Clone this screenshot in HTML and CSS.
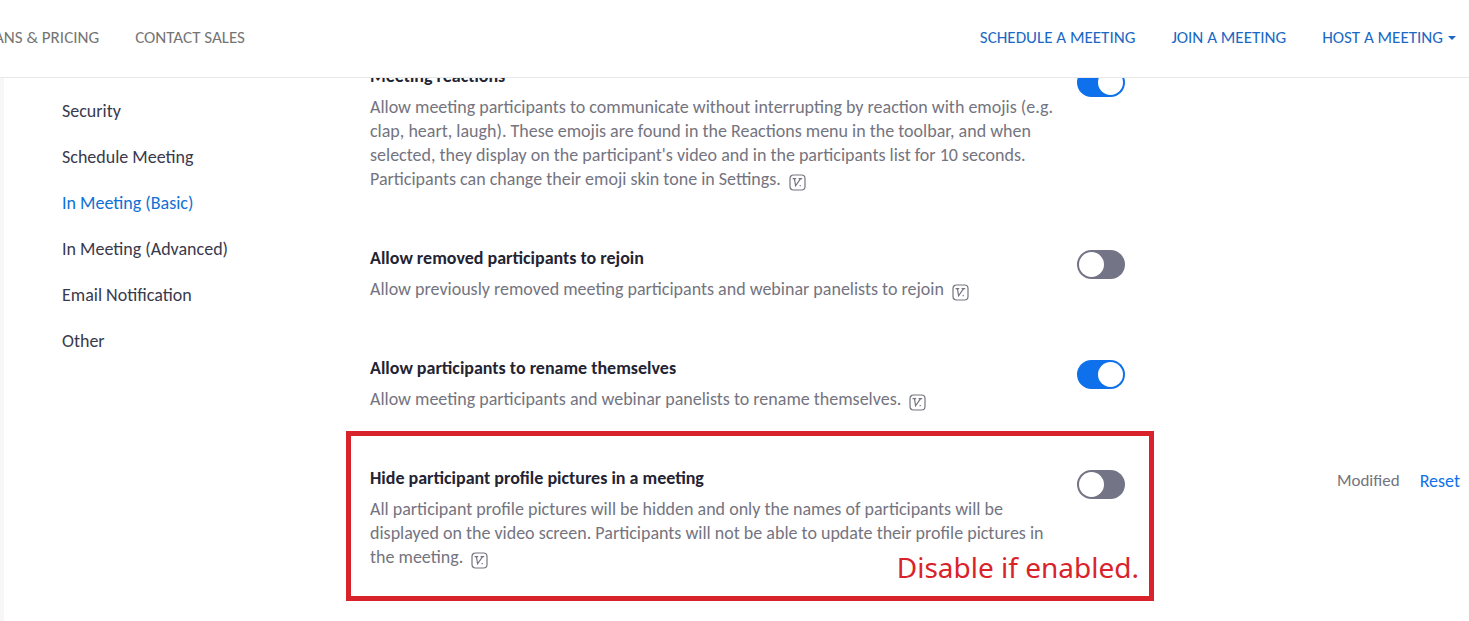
FILE: index.html
```html
<!DOCTYPE html>
<html lang="en">
<head>
<meta charset="utf-8">
<title>Settings</title>
<meta name="viewport" content="width=device-width, initial-scale=1">
<link rel="stylesheet" href="styles.css">
</head>
<body>
<svg class="sprite" aria-hidden="true">
  <symbol id="version" viewBox="0 0 17 17">
    <rect x="1" y="1" width="15" height="15" rx="3.5" fill="none" stroke="currentColor" stroke-width="1.2"/>
    <path d="M3.6 4.6h3.6M9.6 4.6h3.6M5.4 4.6l1.2 7.2 5-7.2M10.6 11.6h1.2" fill="none" stroke="currentColor" stroke-width="1.2"/>
  </symbol>
</svg>
<header class="topbar">
  <nav class="nav nav-site" aria-label="Site">
    <a href="#">PLANS &amp; PRICING</a>
    <a href="#">CONTACT SALES</a>
  </nav>
  <nav class="nav nav-actions" aria-label="Meetings">
    <a href="#">SCHEDULE A MEETING</a>
    <a href="#">JOIN A MEETING</a>
    <button class="menu-button" type="button">HOST A MEETING<span class="caret"></span></button>
  </nav>
</header>
<div class="page">
  <nav class="sections" aria-label="Settings sections">
    <a href="#">Security</a>
    <a href="#">Schedule Meeting</a>
    <a class="current" href="#">In Meeting (Basic)</a>
    <a href="#">In Meeting (Advanced)</a>
    <a href="#">Email Notification</a>
    <a href="#">Other</a>
  </nav>
  <main class="settings">
    <section class="setting">
      <div class="info">
        <label class="title" for="reactions">Meeting reactions</label>
        <p class="desc">Allow meeting participants to communicate without interrupting by reaction with emojis (e.g. clap, heart, laugh). These emojis are found in the Reactions menu in the toolbar, and when selected, they display on the participant's video and in the participants list for 10 seconds. Participants can change their emoji skin tone in Settings. <svg class="version"><use href="#version"/></svg></p>
      </div>
      <input class="switch" id="reactions" type="checkbox" role="switch" checked>
    </section>
    <section class="setting">
      <div class="info">
        <label class="title" for="rejoin">Allow removed participants to rejoin</label>
        <p class="desc">Allow previously removed meeting participants and webinar panelists to rejoin <svg class="version"><use href="#version"/></svg></p>
      </div>
      <input class="switch" id="rejoin" type="checkbox" role="switch">
    </section>
    <section class="setting">
      <div class="info">
        <label class="title" for="rename">Allow participants to rename themselves</label>
        <p class="desc">Allow meeting participants and webinar panelists to rename themselves. <svg class="version"><use href="#version"/></svg></p>
      </div>
      <input class="switch" id="rename" type="checkbox" role="switch" checked>
    </section>
    <section class="setting">
      <div class="info">
        <label class="title" for="pictures">Hide participant profile pictures in a meeting</label>
        <p class="desc">All participant profile pictures will be hidden and only the names of participants will be displayed on the video screen. Participants will not be able to update their profile pictures in the meeting. <svg class="version"><use href="#version"/></svg></p>
      </div>
      <input class="switch" id="pictures" type="checkbox" role="switch">
      <div class="status"><span>Modified</span><a href="#">Reset</a></div>
      <div class="callout">Disable if enabled.</div>
    </section>
  </main>
</div>
</body>
</html>
```
FILE: styles.css
```css
* { box-sizing: border-box; }
body {
  margin: 0;
  background: #fff;
  color: #747480;
  font: 18px/24px Carlito, Lato, sans-serif;
  overflow: hidden;
}
a { color: inherit; text-decoration: none; }
.sprite { position: absolute; width: 0; height: 0; }

.topbar {
  position: fixed;
  inset: 0 0 auto;
  z-index: 2;
  display: flex;
  justify-content: space-between;
  align-items: center;
  padding: 26px 13px 27px 0;
  background: #fff;
  border-bottom: 1px solid #e8e8e8;
  overflow: hidden;
}
.nav { display: flex; gap: 36px; font-size: 17px; white-space: nowrap; }
.nav-site { margin-left: -22px; color: #747474; }
.nav-actions { color: #1a68c4; }
.menu-button {
  display: flex;
  align-items: center;
  gap: 5px;
  padding: 0;
  border: 0;
  background: none;
  color: inherit;
  font: inherit;
}
.caret { border: 4px solid transparent; border-top-color: currentColor; border-bottom: 0; }

.page {
  display: grid;
  grid-template-columns: 308px minmax(0, 1fr);
  min-height: 100vh;
  padding: 64px 9px 0 58px;
  border-left: 4px solid #f7f7f7;
}
.sections { display: flex; flex-direction: column; gap: 22px; padding-top: 35px; color: #39394d; }
.sections .current { color: #0e71d4; }

.setting {
  position: relative;
  display: grid;
  grid-template-columns: minmax(0, 683px) 48px minmax(0, 1fr);
  column-gap: 24px;
  align-items: start;
  padding-bottom: 55px;
}
.title { display: block; color: #232333; font-weight: 600; }
.desc { margin: 7px 0 0; }
.version { width: 17px; height: 17px; margin-left: 4px; vertical-align: -6px; }
.switch {
  appearance: none;
  width: 48px;
  height: 29px;
  margin: 4px 0 0;
  padding: 2px;
  border-radius: 15px;
  background: #747487;
}
.switch::before { content: ""; display: block; width: 25px; height: 25px; border-radius: 50%; background: #fff; }
.switch:checked { background: #0e71eb; }
.switch:checked::before { margin-left: auto; }
.status { display: flex; justify-content: flex-end; gap: 20px; padding-top: 3px; }
.status span { font-size: 17px; }
.status a { color: #0e71eb; }
.callout {
  position: absolute;
  top: -35px;
  left: -24px;
  width: 808px;
  height: 170px;
  display: flex;
  align-items: flex-end;
  justify-content: flex-end;
  padding: 0 10px 9px;
  border: 5px solid #d9232a;
  color: #d9232a;
  font: 28px/40px "Noto Sans", sans-serif;
  pointer-events: none;
}
```
